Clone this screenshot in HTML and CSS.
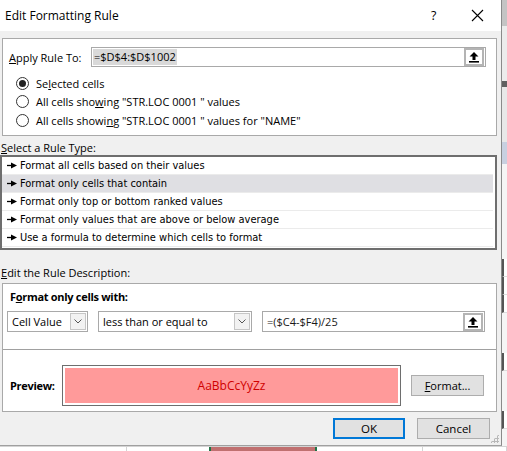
FILE: index.html
```html
<!DOCTYPE html>
<html>
<head>
<meta charset="utf-8">
<link rel="stylesheet" href="styles.css">
</head>
<body>
<div class="screen">
  <div class="top">
    <div class="dialog">
      <div class="titlebar">
        <span class="title">Edit Formatting Rule</span>
        <span class="help">?</span>
        <span class="close"><svg width="13" height="13" viewBox="0 0 13 13"><path d="M1 1L12 12M12 1L1 12" stroke="#000" stroke-width="1.1" fill="none"/></svg></span>
      </div>
      <div class="body">
        <div class="group apply">
          <div class="apply-row">
            <span class="lbl"><u>A</u>pply Rule To:</span>
            <div class="refbox">
              <span class="sel">=$D$4:$D$1002</span>
              <span class="collapse"><svg width="12" height="12" viewBox="0 0 12 12"><path d="M6 1L10.5 5.5H7.5V9H4.5V5.5H1.5Z" fill="#000"/><rect x="1" y="10" width="10" height="1.6" fill="#000"/></svg></span>
            </div>
          </div>
          <div class="radios">
            <div class="radio"><span class="circle on"></span><span>Se<u>l</u>ected cells</span></div>
            <div class="radio"><span class="circle"></span><span>All cells sho<u>w</u>ing "STR.LOC 0001 " values</span></div>
            <div class="radio"><span class="circle"></span><span>All cells showi<u>n</u>g "STR.LOC 0001 " values for "NAME"</span></div>
          </div>
        </div>
        <div class="section-label first"><u>S</u>elect a Rule Type:</div>
        <div class="listbox">
          <div class="item"><svg class="arr" width="10" height="7" viewBox="0 0 10 7"><path d="M0 3.5H5" stroke="#000" stroke-width="1.3"/><path d="M4 0.5L10 3.5L4 6.5Z" fill="#000"/></svg>Format all cells based on their values</div>
          <div class="item active"><svg class="arr" width="10" height="7" viewBox="0 0 10 7"><path d="M0 3.5H5" stroke="#000" stroke-width="1.3"/><path d="M4 0.5L10 3.5L4 6.5Z" fill="#000"/></svg>Format only cells that contain</div>
          <div class="item"><svg class="arr" width="10" height="7" viewBox="0 0 10 7"><path d="M0 3.5H5" stroke="#000" stroke-width="1.3"/><path d="M4 0.5L10 3.5L4 6.5Z" fill="#000"/></svg>Format only top or bottom ranked values</div>
          <div class="item"><svg class="arr" width="10" height="7" viewBox="0 0 10 7"><path d="M0 3.5H5" stroke="#000" stroke-width="1.3"/><path d="M4 0.5L10 3.5L4 6.5Z" fill="#000"/></svg>Format only values that are above or below average</div>
          <div class="item"><svg class="arr" width="10" height="7" viewBox="0 0 10 7"><path d="M0 3.5H5" stroke="#000" stroke-width="1.3"/><path d="M4 0.5L10 3.5L4 6.5Z" fill="#000"/></svg>Use a formula to determine which cells to format</div>
        </div>
        <div class="section-label second"><u>E</u>dit the Rule Description:</div>
        <div class="group desc">
          <div class="desc-top">
            <div class="bold">F<u>o</u>rmat only cells with:</div>
            <div class="combos">
              <div class="combo c1"><span class="ctext">Cell Value</span><span class="drop"><svg width="8" height="5" viewBox="0 0 8 5"><path d="M0.5 0.5L4 4L7.5 0.5" stroke="#555" fill="none"/></svg></span></div>
              <div class="combo c2"><span class="ctext">less than or equal to</span><span class="drop"><svg width="8" height="5" viewBox="0 0 8 5"><path d="M0.5 0.5L4 4L7.5 0.5" stroke="#555" fill="none"/></svg></span></div>
              <div class="refbox formula">
                <span class="ftext">=($C4-$F4)/25</span>
                <span class="collapse"><svg width="12" height="12" viewBox="0 0 12 12"><path d="M6 1L10.5 5.5H7.5V9H4.5V5.5H1.5Z" fill="#000"/><rect x="1" y="10" width="10" height="1.6" fill="#000"/></svg></span>
              </div>
            </div>
          </div>
          <div class="desc-bottom">
            <span class="bold plabel">Preview:</span>
            <div class="preview"><div class="pfill">AaBbCcYyZz</div></div>
            <span class="btn fmt"><u>F</u>ormat...</span>
          </div>
        </div>
        <div class="buttons">
          <span class="btn ok">OK</span>
          <span class="btn cancel">Cancel</span>
        </div>
        <div class="grip"></div>
      </div>
    </div>
    <div class="side">
      <div class="s1"></div>
      <div class="s2"></div>
      <div class="s3"></div>
      <div class="s4"></div>
      <div class="s5"></div>
      <div class="s6"></div>
      <div class="s7"></div>
      <div class="s7"></div>
      <div class="s7"></div>
      <div class="s6b"></div>
      <div class="s7"></div>
      <div class="s6b"></div>
      <div class="s7"></div>
      <div class="s6c"></div>
    </div>
  </div>
  <div class="sheet">
    <div class="cell w127"></div>
    <div class="cell w84"></div>
    <div class="cell pink"></div>
    <div class="cell w106"></div>
    <div class="cell rest"></div>
  </div>
</div>
</body>
</html>
```
FILE: styles.css
```css
* { box-sizing: border-box; }
html, body { margin: 0; padding: 0; }
body {
  font-family: "Open Sans", "Noto Sans", sans-serif;
  font-size: 11px;
  color: #000;
  background: #fff;
  width: 507px;
  height: 451px;
  overflow: hidden;
}
u { text-decoration: underline; text-underline-offset: 1px; }
.screen { display: flex; flex-direction: column; width: 507px; height: 451px; }
.top { display: flex; height: 446px; }
.dialog {
  width: 502px;
  height: 446px;
  background: #f0f0f0;
  border-right: 1px solid #8a8a8a;
  border-bottom: 1px solid #a0a0a0;
  display: flex;
  flex-direction: column;
}
.titlebar {
  height: 31px;
  background: #fff;
  display: flex;
  align-items: center;
  padding-left: 5px;
  font-size: 12px;
}
.title { flex: 1; padding-bottom: 1px; }
.help { width: 12px; margin-right: 28px; font-size: 12.5px; }
.close { width: 13px; margin-right: 17px; display: flex; }
.body { position: relative; flex: 1; display: flex; flex-direction: column; }
.group {
  background: #fff;
  border: 1px solid #a9a9a9;
  margin-left: 2px;
  width: 495px;
}
.apply { margin-top: 7px; padding: 8px 0 6px 0; height: 98px; }
.apply-row { display: flex; align-items: center; height: 20px; }
.lbl { width: 88px; padding-left: 6px; }
.refbox {
  width: 395px;
  height: 20px;
  border: 1px solid #a9a9a9;
  background: #fff;
  display: flex;
  align-items: center;
  justify-content: space-between;
  padding-left: 1px;
}
.sel { background: #d9d9d9; padding: 0 1px; line-height: 16px; }
.collapse {
  width: 20px;
  height: 18px;
  border: 2px solid #b4b4b4;
  background: #fff;
  display: flex;
  align-items: center;
  justify-content: center;
  margin-right: 1px;
}
.radios { margin-top: 7px; display: flex; flex-direction: column; }
.radio { display: flex; align-items: center; height: 18.5px; padding-left: 13px; }
.circle {
  width: 13px;
  height: 13px;
  border: 1px solid #333;
  border-radius: 50%;
  margin-right: 7px;
  display: flex;
  align-items: center;
  justify-content: center;
  background: #fff;
}
.circle.on::after {
  content: "";
  width: 7px;
  height: 7px;
  border-radius: 50%;
  background: #222;
}
.section-label { padding-left: 1px; height: 15px; line-height: 15px; }
.section-label.first { margin-top: 4px; }
.section-label.second { margin-top: 15px; margin-bottom: 3px; }
.listbox {
  width: 497px;
  height: 95px;
  border: 2px solid #6e6e6e;
  background: #fff;
  padding: 0 2px 0 0;
  font-family: "DejaVu Sans", sans-serif;
  font-size: 9.9px;
}
.item {
  height: 18px;
  border-bottom: 1px solid #ebebeb;
  display: flex;
  align-items: center;
  padding-left: 5px;
}
.item.active { background: #dfdfe3; }
.arr { margin-right: 3px; }
.desc { height: 129px; display: flex; flex-direction: column; }
.desc-top { border-bottom: 1px solid #a0a0a0; height: 66px; padding: 5px 0 0 0; }
.bold { font-weight: bold; padding-left: 7px; line-height: 16px; letter-spacing: -0.3px; }
.combos { display: flex; margin-top: 6px; padding-left: 4px; align-items: center; }
.combo {
  height: 21px;
  border: 1px solid #a9a9a9;
  background: #fff;
  display: flex;
  align-items: center;
  justify-content: space-between;
  padding: 0 1px 0 4px;
}
.c1 { width: 81px; margin-right: 10px; }
.c2 { width: 154px; margin-right: 10px; }
.drop {
  width: 16px;
  height: 17px;
  background: #f2f2f2;
  border: 1px solid #c6c6c6;
  display: flex;
  align-items: center;
  justify-content: center;
}
.formula { width: 223px; height: 21px; padding-left: 4px; }
.ftext { color: #1a1a1a; }
.desc-bottom { flex: 1; display: flex; align-items: center; padding-top: 10px; }
.plabel { width: 59px; }
.preview {
  width: 339px;
  height: 41px;
  border: 1px solid #6e6e6e;
  padding: 2px;
  margin-right: 10px;
}
.pfill {
  height: 100%;
  background: #ff9a9a;
  color: #d00000;
  display: flex;
  align-items: center;
  justify-content: center;
  font-size: 12px;
}
.btn {
  background: #e1e1e1;
  border: 1px solid #adadad;
  display: flex;
  align-items: center;
  justify-content: center;
  height: 21px;
  width: 73px;
}
.fmt { height: 21px; }
.buttons { display: flex; justify-content: flex-end; padding-right: 11px; margin-top: 6px; gap: 12px; font-size: 11.5px; }
.ok { border: 2px solid #0078d7; width: 72px; }
.grip {
  position: absolute;
  right: 2px;
  bottom: 2px;
  width: 9px;
  height: 9px;
  background-image: radial-gradient(circle, #b8b8b8 1px, transparent 1.2px);
  background-size: 3px 3px;
  clip-path: polygon(100% 0, 100% 100%, 0 100%);
}
.side { width: 5px; display: flex; flex-direction: column; background: #e6e6e6; overflow: hidden; }
.s1 { height: 26px; background: #c4c4c4; }
.s2 { height: 55px; background: #ececec; }
.s3 { height: 6px; background: #606060; }
.s4 { height: 55px; background: #e8e8e8; }
.s5 { height: 22px; background: #c8d0e0; }
.s6 { height: 95px; background: #f5f5f5; }
.s6b { height: 40px; background: #f5f5f5; }
.s6c { flex: 1; background: #f5f5f5; }
.s7 { height: 18px; background: #fff; border-left: 2px solid #555; border-bottom: 1px solid #ddd; }
.sheet { flex: 1; display: flex; border-top: 1px solid #d4d4d4; }
.cell { border-right: 1px solid #d4d4d4; height: 100%; }
.w127 { width: 127px; }
.w84 { width: 84px; border-right: 2px solid #217346; }
.pink { width: 106px; background: #c07070; border-right: 2px solid #217346; }
.w106 { width: 106px; }
.rest { flex: 1; }
```
